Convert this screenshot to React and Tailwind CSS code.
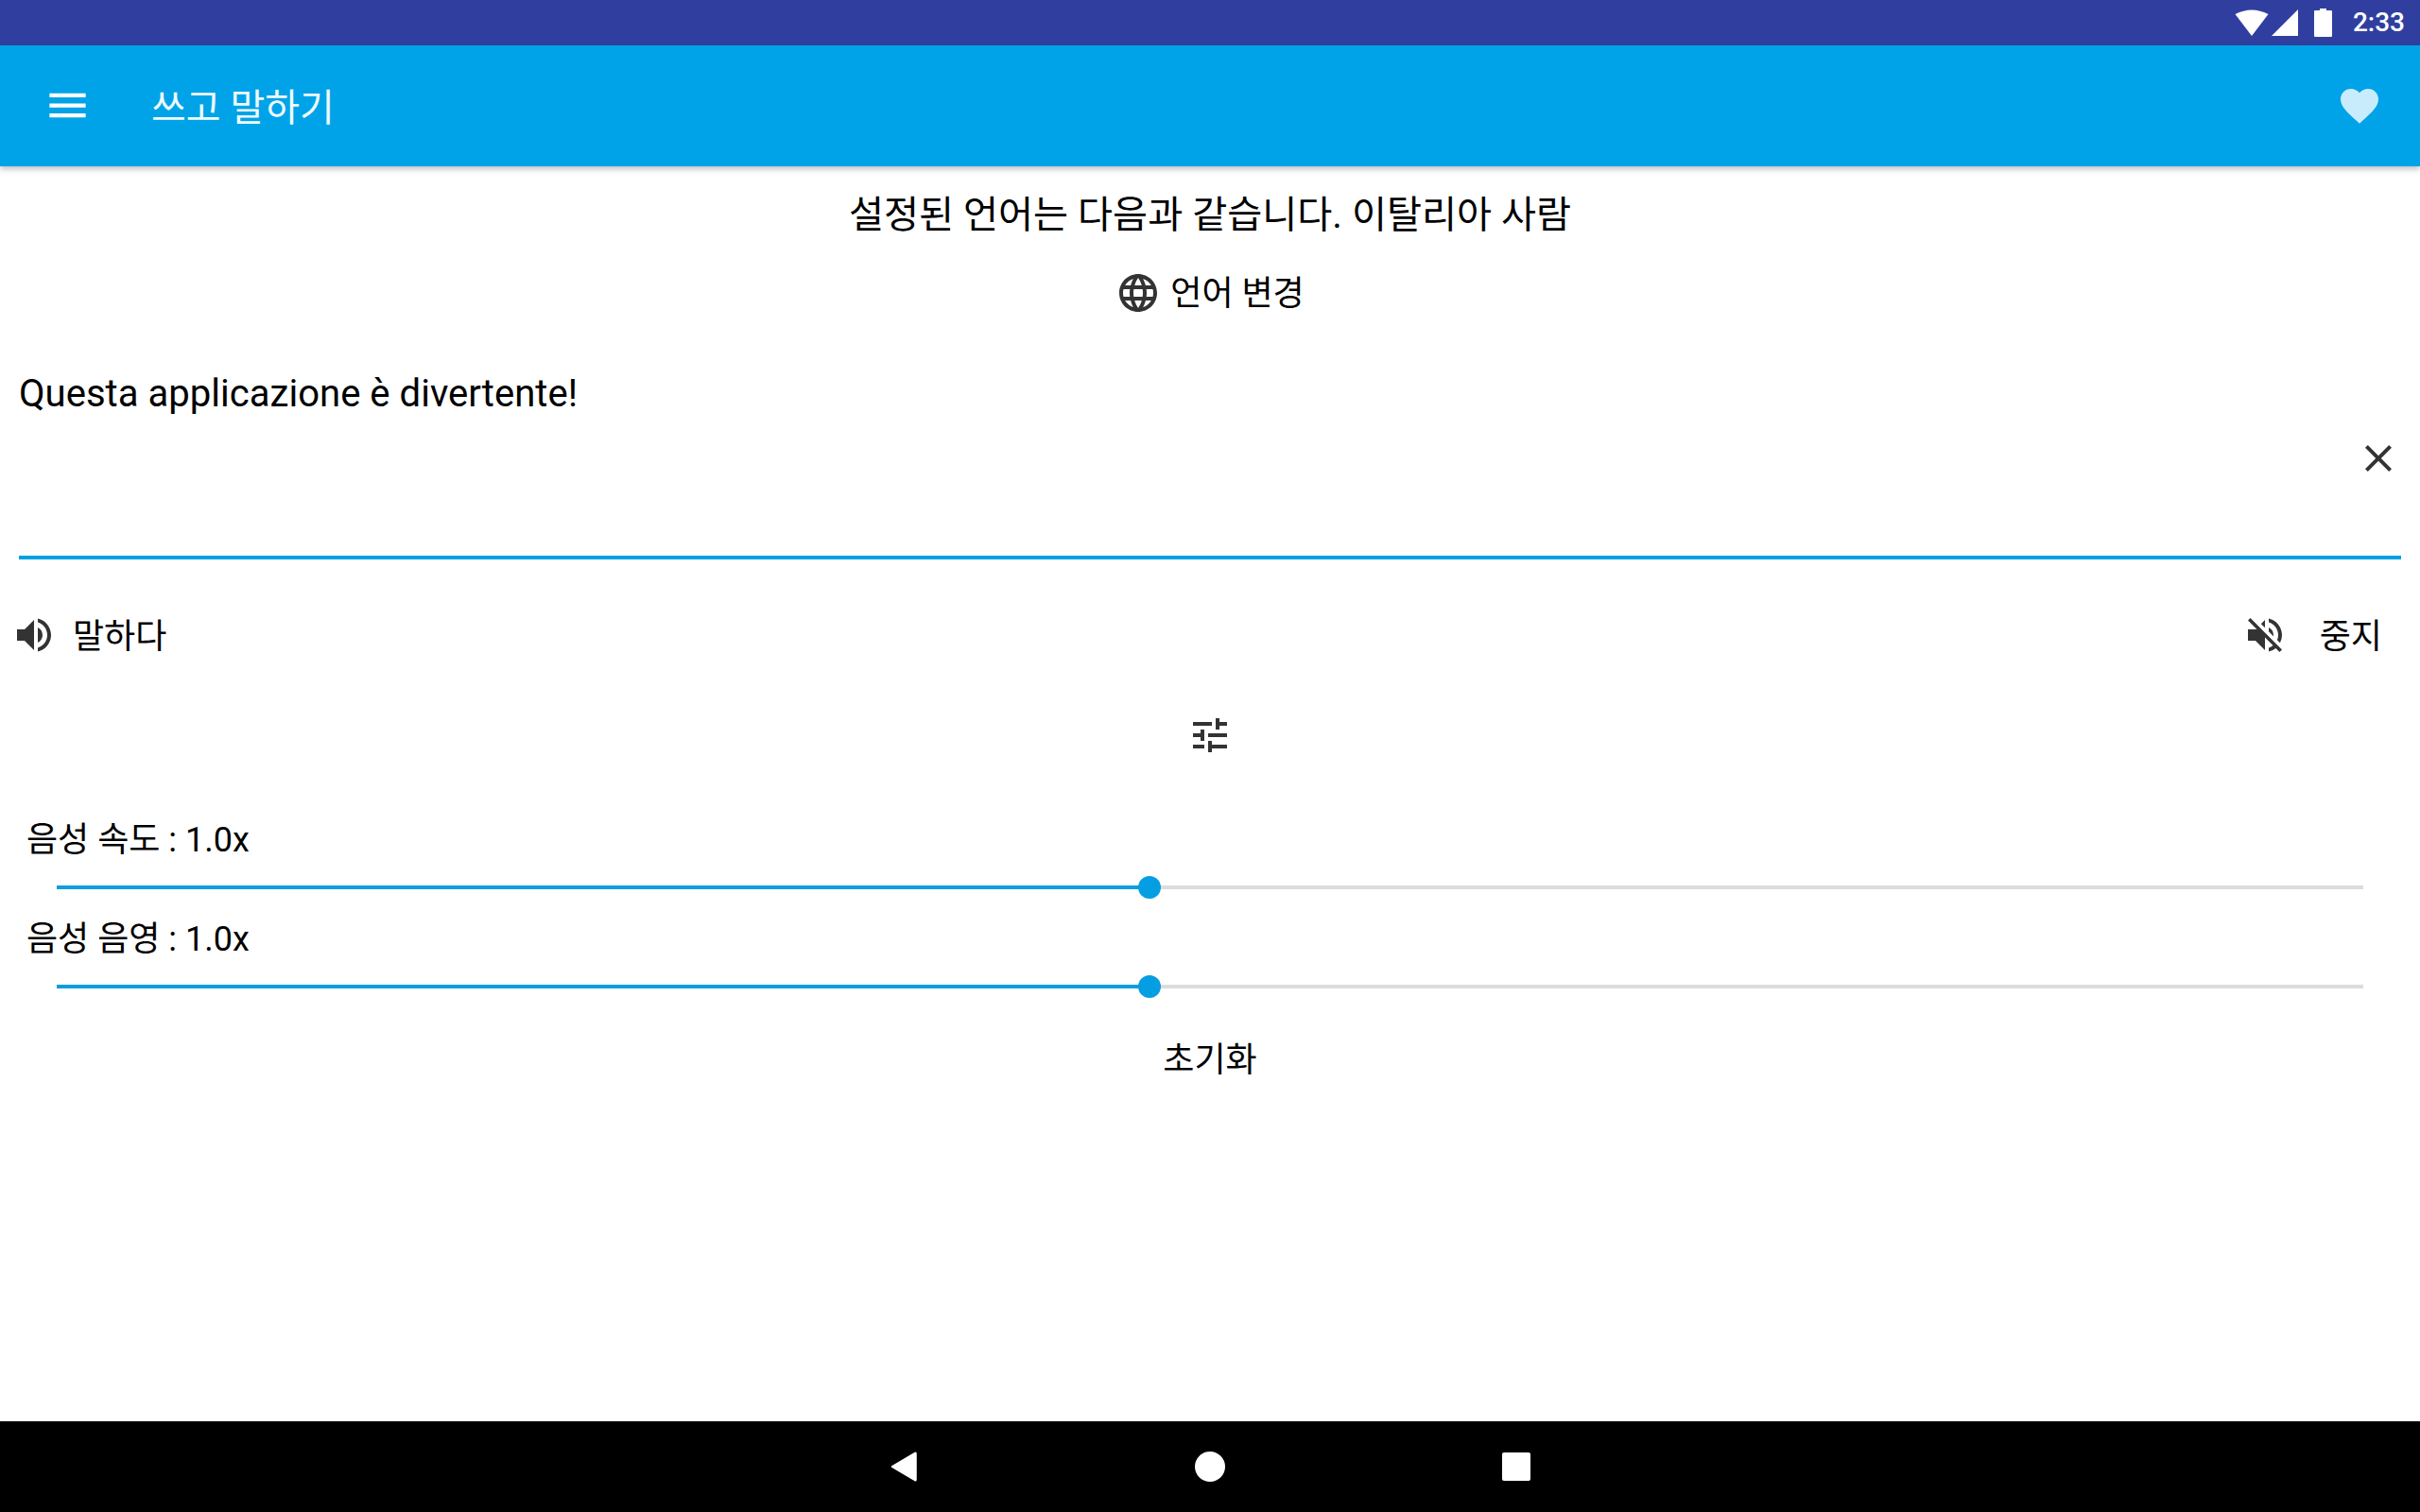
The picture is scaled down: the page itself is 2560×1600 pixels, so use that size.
import React from "react";
import { MdLanguage, MdVolumeUp, MdVolumeOff, MdTune, MdClose, MdMenu, MdFavorite } from "react-icons/md";

const font = "font-['Roboto','Noto_Sans_CJK_KR',sans-serif]";

function Slider({ label }) {
  return (
    <div className="flex flex-col">
      <div className="h-[47px] pt-[2px] pl-[28px] flex items-center text-[36px] leading-none text-black">{label}</div>
      <div className="h-[57px] pb-[1px] px-[60px] flex items-center">
        <div className="relative w-full h-[4px] bg-[#dcdcdc]">
          <div className="h-full w-[1156px] bg-[#0a9fdc]" />
          <div className="absolute left-[1144px] top-[-10px] w-[24px] h-[24px] rounded-full bg-[#069ee2]" />
        </div>
      </div>
    </div>
  );
}

export default function App() {
  return (
    <div className={`${font} w-[2560px] h-[1600px] flex flex-col bg-white overflow-hidden`}>
      <div className="h-[48px] shrink-0 bg-[#303f9f] flex items-center justify-end pr-[16px] text-white">
        <svg width="36" height="30" viewBox="0 0 36 30"><path d="M0.5 6 Q18 -3 35.5 6 L18 29 Z" fill="#fff" /></svg>
        <svg width="28" height="28" viewBox="0 0 28 28" className="ml-[3px] mr-[17px]"><path d="M0 28 L28 0 L28 28 Z" fill="#fff" /></svg>
        <svg width="19" height="30" viewBox="0 0 19 30" className="mr-[22px]"><path d="M6 0 H13 V2 H18 Q19 2 19 3 V29 Q19 30 18 30 H1 Q0 30 0 29 V3 Q0 2 1 2 H6 Z" fill="#fff" /></svg>
        <span className="text-[28px] leading-none font-medium">2:33</span>
      </div>
      <div className="relative z-10 h-[128px] shrink-0 bg-[#00a3e8] flex items-center shadow-[0_3px_6px_rgba(0,0,0,0.25)]">
        <MdMenu className="ml-[46px] mb-[2px] text-white" size={51} />
        <span className="ml-[63px] mt-[5px] text-[40px] leading-none text-[#eefaff]">쓰고 말하기</span>
        <MdFavorite className="ml-auto mr-[40px] text-[#c9ecfc]" size={48} />
      </div>
      <main className="flex-1 flex flex-col min-h-0">
        <div className="h-[98px] pt-[6px] flex items-center justify-center text-[40.25px] leading-none text-black">설정된 언어는 다음과 같습니다. 이탈리아 사람</div>
        <div className="h-[70px] pt-[1px] flex items-center justify-center">
          <MdLanguage className="text-[#333]" size={48} />
          <span className="ml-[10px] mt-[2px] text-[36px] leading-none text-black">언어 변경</span>
        </div>
        <div className="relative mx-[20px] h-[248px] border-b-[4px] border-[#00a0e0]">
          <div className="pt-[49px] text-[40.1px] leading-[48px] text-black">Questa applicazione è divertente!</div>
          <MdClose className="absolute right-0 top-[117px] text-[#333]" size={48} />
        </div>
        <div className="h-[160px] flex items-center justify-between">
          <div className="flex items-center pl-[12px]">
            <MdVolumeUp className="text-[#333]" size={48} />
            <span className="ml-[17px] mt-[3px] text-[36px] leading-none text-black">말하다</span>
          </div>
          <div className="flex items-center pr-[40px]">
            <MdVolumeOff className="text-[#333]" size={48} />
            <span className="ml-[34px] mt-[3px] text-[36px] leading-none text-black">중지</span>
          </div>
        </div>
        <div className="h-[51px] pt-[1px] flex items-center justify-center">
          <MdTune className="text-[#333]" size={48} />
        </div>
        <div className="pt-[61px] flex flex-col gap-[1px]">
          <Slider label="음성 속도 : 1.0x" />
          <Slider label="음성 음영 : 1.0x" />
        </div>
        <div className="h-[48px] mt-[25px] flex items-center justify-center text-[36px] leading-none text-black">초기화</div>
      </main>
      <div className="h-[96px] shrink-0 bg-black flex items-center justify-center pl-[1px]">
        <svg width="28" height="32" viewBox="0 0 28 32"><path d="M26 1.5 L1.5 16 L26 30.5 Q27 31 27 30 V2 Q27 1 26 1.5 Z" fill="#fff" stroke="#fff" strokeWidth="1.5" strokeLinejoin="round" /></svg>
        <div className="ml-[294px] w-[32px] h-[32px] rounded-full bg-white" />
        <div className="ml-[293px] w-[30px] h-[30px] rounded-[2px] bg-white" />
      </div>
    </div>
  );
}
